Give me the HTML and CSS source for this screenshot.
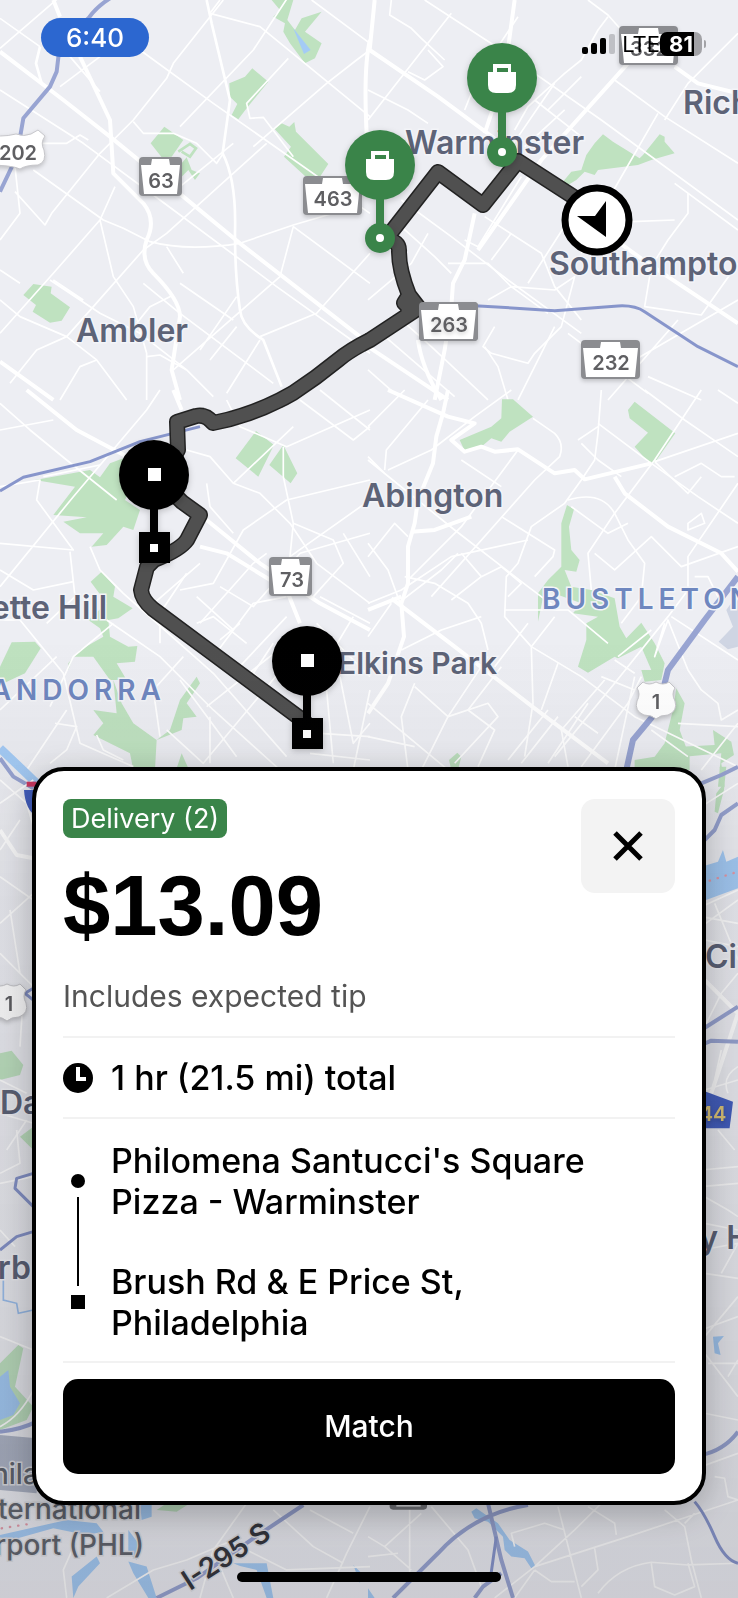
FILE: index.html
```html
<!DOCTYPE html>
<html lang="en">
<head>
  <meta charset="UTF-8">
  <meta name="viewport" content="width=device-width, initial-scale=1.0">
  <title>Delivery offer</title>
  <link rel="stylesheet" href="styles.css">
</head>
<body>
  <div class="screen">

    <svg class="map" viewBox="0 0 738 1598" preserveAspectRatio="xMidYMin slice" role="img" aria-label="Route map">
      <defs>
        <symbol id="bag" viewBox="0 0 30 30">
          <path d="M6 0h18v8h5v13q0 8-8 8H9q-8 0-8-8V8h5zM10 4v4h11V4z" fill-rule="evenodd"/>
        </symbol>
        <symbol id="us-shield" viewBox="0 0 42 40">
          <path d="M8 2q6 4 13 0q7 4 13 0l6 6q-4 6 0 13q3 10-7 14q-8 0-12 4q-4-4-12-4q-10-4-7-14q4-7 0-13z"/>
        </symbol>
        <symbol id="pa-wide" viewBox="0 0 59 39">
          <rect width="59" height="39" rx="4" fill="#8b8c90"/>
          <path d="M2 8h17l1-6h19l1 6h17l-3 29H5z" fill="#fff"/>
        </symbol>
        <symbol id="pa-small" viewBox="0 0 43 39">
          <rect width="43" height="39" rx="4" fill="#8b8c90"/>
          <path d="M2 8h10l1-6h17l1 6h10l-3 29H5z" fill="#fff"/>
        </symbol>
      </defs>

      <rect width="738" height="1598" fill="#edeef3"/>

      <!-- tiles -->
      <g transform="scale(.3333)">
        <g class="park">
          <path d="M815 0L880 0L862 60L885 90L905 55L965 35L915 95L965 130L945 175L915 190L870 130L850 95L855 70L820 50L840 30Z"/>
          <path d="M688 250L735 230L757 205L805 245L740 325L715 358L695 345L712 312L690 290Z"/>
          <path d="M822 385L845 370L868 380L883 366L888 395L985 492L960 530L915 528L852 470L873 440Z"/>
          <path d="M452 430L493 380L550 420L515 470L485 472Z"/>
          <path d="M545 490L560 472L575 510L600 520L585 540L565 510L545 530Z"/>
          <path d="M70 885L100 852L155 860L152 880L210 922L185 962L150 968L98 935L108 915Z"/>
        </g>
        <path d="M535 455L570 432L588 445L570 470L545 455" fill="none" stroke="#bfe2c0" stroke-width="8"/>
        <path class="water" d="M880 85L932 150L912 162Z"/>
        <g class="road">
          <path d="M0 55L120 140M0 145L180 -10M0 270L250 430L480 600L830 860L1110 1060"/>
          <path d="M0 720L60 640L45 500M45 575L135 675L155 640L300 460L400 360L500 235L520 190L670 0"/>
          <path d="M420 150L640 310L1110 640M300 275L210 170M540 380L760 150L865 -10"/>
          <path d="M760 440L980 250L1070 180L1110 150M865 175L740 310L750 355L790 352L880 470"/>
          <path d="M935 0L1110 130M660 0L630 40L780 80L1110 350"/>
          <path d="M120 430L200 430L240 405L265 420M100 510L310 660L370 685L450 725Q560 755 720 730L880 675L1000 640"/>
          <path d="M0 1000L160 820L300 660L345 560M300 660L340 830L400 920L440 1060L440 1200"/>
          <path d="M0 810L60 850M150 840L300 940L420 1000L560 1110L640 1190M160 840L250 900"/>
          <path d="M0 900L60 950L200 1010L290 1080L380 1200M30 1150L110 1050L200 1010L280 920L430 750L500 700L800 430"/>
          <path d="M410 970L450 920L520 885M430 850L540 940L820 1150M540 850L700 960M500 740L550 820"/>
          <path d="M520 1110L840 830L880 680L1110 850M600 1050L710 890M440 1070L480 1065L560 1110"/>
          <path d="M780 1010L950 940L1110 760M630 1080L710 980M680 1180L780 1020M180 1200L240 1100L290 1080"/>
          <path d="M400 365L430 400L520 400M520 400L590 430L650 490L670 460M540 560L700 430M180 260L300 170"/>
        </g>
        <g class="road mid">
          <path d="M620 0L635 70L690 300L668 460Q710 540 705 700Q705 830 720 930Q725 980 790 1020L845 1160"/>
          <path d="M120 140L108 190L125 250"/>
        </g>
        <g class="road wide">
          <path d="M0 155L190 300L330 410L550 590L720 730L1080 1010"/>
          <path d="M240 170L330 360L340 520L430 610Q470 660 440 720Q420 780 460 820Q540 900 540 950L515 1110L540 1200"/>
          <path d="M0 1085L160 1200M160 0L180 50M1110 120Q1090 200 1100 400"/>
        </g>
        <path class="highway" d="M330 -5Q290 20 265 55L180 130L170 215L150 260L70 355L50 470L0 575"/>
      </g>

      <g transform="translate(368) scale(.3333)">
        <g class="park">
          <path d="M585 545L610 515L640 510L655 465L680 430L705 403L735 425L815 475L825 465L875 403L890 410L890 425L920 460L850 480L810 495L690 510L680 525L650 515L625 540L600 555Z"/>
        </g>
        <g class="road">
          <path d="M170 0L400 150L700 360L1110 660M70 0L65 45L130 85L160 115L230 180M250 40L70 270L0 360"/>
          <path d="M450 50L330 230L290 330M0 270L120 330L180 370M180 150L225 200L170 240L120 215"/>
          <path d="M660 0L720 45L760 90M720 50L690 90L640 180L590 220L480 320L440 390"/>
          <path d="M740 240L890 350L1110 490M890 360L960 250L1110 100M640 230L540 330M590 330L470 440"/>
          <path d="M870 340L720 600L640 760M960 580L960 640L900 720L850 800L830 920L1000 945L1110 790"/>
          <path d="M920 550L1110 690M790 665L920 660M350 650L520 760L560 860L640 960M100 600L250 710L420 840L640 1000"/>
          <path d="M0 900L130 790L180 700M100 680L200 770L250 820M240 790L360 790L430 860L540 940M370 780L430 700"/>
          <path d="M360 900L430 860L560 870L620 830L580 980L500 1060L480 1090L370 1060L345 1040L380 980"/>
          <path d="M0 1110L80 1180M100 960L190 1040L360 1200M40 1000L260 1190M350 1040L390 1100L420 1200"/>
          <path d="M560 980L450 1200M600 1000L840 1180M930 960L720 1200M800 1080L1110 900M840 1130L1000 1200"/>
          <path d="M460 530L330 740L290 720M500 300L640 410M560 250L430 440M640 600L480 850"/>
        </g>
        <g class="road wide">
          <path d="M20 0L5 150L210 290L440 460M440 0L410 220L350 400M780 190L520 480L330 750"/>
          <path d="M700 690L840 790L1110 970M920 200L990 250L1110 280M320 640L290 780L255 850L250 920L230 1050L200 1200"/>
          <path d="M0 1040L240 1200M150 1020Q160 1100 220 1200"/>
        </g>
        <path class="highway thin" d="M320 917L560 932L750 918Q800 915 830 935L990 1040L1110 1100"/>
      </g>

      <g transform="translate(0 390) scale(.3333)">
        <g class="park">
          <path d="M105 270L270 240L300 262L330 220L370 205L420 240L375 330L420 360L400 420L370 410L320 465L275 470L310 430L240 430L190 395L260 382L160 375L225 290Z"/>
          <path d="M707 205L768 123L822 165L775 260ZM808 225L850 165L892 250L872 280Z"/>
          <path d="M272 575L305 545L345 590L340 620L398 655L355 685L325 690L330 740L385 770L412 768L405 815L350 820L380 870L330 870L280 800L220 800L205 840L205 820L240 780L310 740L300 715L265 690L320 640Z"/>
          <path d="M35 757L105 755L122 775L75 850L0 885L0 830Z"/>
          <path d="M340 870L365 940L400 1000L470 1050L510 1020L540 930L590 860L600 880L560 940L590 980L550 985L545 1020L470 1050L465 1140L400 1140L390 1090L280 1035L310 1000L280 960L350 970Z"/>
          <path d="M530 1135L545 1090L565 1135Z"/>
        </g>
        <g class="road">
          <path d="M0 40L90 120L200 210L350 330M0 290L120 270L110 330L220 480L0 460M0 590L220 320L440 60L480 0"/>
          <path d="M0 120L160 90M210 485L225 620L140 700M130 260L300 225M270 470L300 540L370 610L640 850L860 1100"/>
          <path d="M220 575L100 600L0 540M0 690L60 690L190 850L240 1060L400 1130M320 690L480 800L640 960L840 1140"/>
          <path d="M560 180L630 200L700 280L780 310L870 400L950 520L1110 640M620 280L630 350L700 430"/>
          <path d="M680 30L720 110L860 170L1110 60M700 280L880 110M850 170L850 260L880 400L870 500L1110 330"/>
          <path d="M540 600L640 580L730 420L860 330L1110 270M660 590L760 650L900 490L1110 430M480 760L480 670L560 550"/>
          <path d="M450 650L600 520M590 620L700 720M600 700L760 520L800 490M640 800L760 640L860 620M700 850L860 680"/>
          <path d="M620 950L860 760M540 870L710 1100M500 1020L610 1120L860 820M630 980L630 1120M150 1120L200 1080L230 1010L165 1000"/>
          <path d="M900 30L1060 150L1110 110M960 0L1110 120M880 400L1000 450L1030 520L940 620M1030 430L1110 560"/>
          <path d="M960 620L1110 700M950 700L1110 860M1060 680L1000 780M820 760L760 850L940 1010M980 900L1000 1120M1020 860L1060 1060L1110 1000"/>
          <path d="M960 1030L1110 1040M930 1090L1110 1110M1110 900L1060 1140M550 800L460 900L480 1040M340 700L220 800L150 950"/>
          <path d="M0 960L170 800M80 1140L200 960M290 1035L310 1080L370 1110M590 700L640 680L740 760M660 750L720 700"/>
        </g>
        <g class="road wide">
          <path d="M80 0L230 120L400 210L470 260L620 390L780 520L960 640L1110 720"/>
          <path d="M600 470L680 490L860 600L900 700M520 0L545 60"/>
        </g>
        <path class="highway thin" d="M0 303L70 262L270 215L420 155L600 110"/>
        <path class="river" d="M0 1075L110 1180"/>
        <path class="highway" d="M0 1105L40 1160L100 1195"/>
      </g>

      <g transform="translate(368 390) scale(.3333)">
        <g class="park">
          <path d="M402 28L435 28L495 80L425 125L400 155L370 145L340 170L290 182L275 150L370 110L400 85Z"/>
          <path d="M780 60L800 35L922 130L860 218L840 215L800 170L840 128L785 85Z"/>
          <path d="M597 345L618 358L603 410L610 480L635 510L625 545L590 540L610 590L670 600L740 625L755 710L775 745L820 698L860 760L890 820L880 870L830 875L820 840L850 840L820 770L750 805L740 800L660 848L630 830L655 750L655 700L690 680L615 670L640 640L530 600L510 695L510 610L540 570L580 530L580 400Z"/>
          <path d="M925 895L950 940L935 1020L965 1100L965 1140L800 1140L800 1110L860 1100L890 1060L915 960Z"/>
          <path d="M940 1070L1040 1065L1035 1020L1090 1055L1098 1095L1060 1120L1070 1190L1050 1190L1060 1090L950 1100Z"/>
          <path d="M243 1110L268 1088L280 1100L270 1140L250 1140Z"/>
        </g>
        <path fill="#cfd5e3" d="M1110 610L1075 660L1095 710L1052 755L1080 778L1110 770Z"/>
        <g class="road">
          <path d="M0 110L110 0M0 210L260 420L480 590L560 650M50 240L55 180L180 30M50 250L0 200M60 240L190 180L320 80L430 0"/>
          <path d="M700 0L690 130L680 210L640 270L590 340L490 410L450 520L415 560L410 680L490 770L495 940L470 1100"/>
          <path d="M495 85L560 130Q590 160 575 200L500 270L190 620M630 150L690 110M640 160L690 210L760 260M690 100L850 220L990 320L1110 400"/>
          <path d="M830 0L950 90L1110 200M1000 0L860 210L740 370L660 490L670 600M860 215L1110 130M1050 0L1110 40M1110 280L960 500L960 600L900 680L740 880L560 1100"/>
          <path d="M920 260L1000 220L1060 260L1100 260M860 215L960 310L1000 260M600 330Q700 300 740 370L780 450L830 520L820 620L760 700"/>
          <path d="M610 350L720 430L780 400M680 490L740 540L850 440L940 530L1110 470M960 400L1000 370L1010 400L960 420Z"/>
          <path d="M0 640L100 600L250 500L480 450M120 570L280 410L450 180M0 500L80 400L120 440M280 210L400 290M0 460L60 540L100 650"/>
          <path d="M110 560L200 580L300 640L340 700L360 780M280 490L340 560L250 630M340 560L400 530L460 580L420 620M410 660L600 660L720 760"/>
          <path d="M400 380L560 480L555 500L500 560M70 640L0 740M90 640L220 540L270 490M100 780L220 720L340 680"/>
          <path d="M360 800L240 980L160 1140M400 830L300 960L380 1020L330 1130M0 940L240 1140M490 770L640 860L800 980L1110 1130"/>
          <path d="M140 880L100 980L120 1140M140 890L240 980L360 940L390 980L260 1120M0 1040L140 1070M570 820L520 960M710 870L580 1020L600 1130"/>
          <path d="M800 860L740 1140M640 1130L780 940L820 860M890 700L860 800L900 690L960 840L1000 900L1050 940L1060 990L1110 960M930 1000L1110 1010"/>
          <path d="M910 680L1110 810M540 960L420 1110M570 980L460 1120M620 980L690 1030M660 940L540 1120M480 700L380 830M560 680L490 770"/>
          <path d="M740 810L800 850M750 800L850 720M850 1020L960 1100M1110 1000L1000 1140M700 860L800 900M980 560L1020 560L1050 620"/>
        </g>
        <g class="road wide">
          <path d="M240 0L225 70L205 140L195 220L150 330L140 400L120 470L120 580L100 640L108 740L60 880L0 970"/>
          <path d="M60 0L240 80L320 100L250 150L290 185L340 170L380 185L450 178L560 250L620 240L650 268L850 220"/>
          <path d="M740 260L770 310L900 410L1060 490L1110 545M130 425L200 420L310 380"/>
          <path d="M70 625L260 770L500 955L720 1120M0 660L100 620"/>
        </g>
        <path class="highway broad" d="M1110 560L1010 690L900 840L870 960L795 1050L775 1140"/>
      </g>

      <!-- side strips and bottom -->
      <g transform="translate(0 760) scale(.3333)">
        <path class="park" d="M0 880L35 872L70 915L60 945L0 960ZM60 1130L100 1100L100 1170Z"/>
        <g class="road">
          <path d="M0 130L100 60M0 60L80 130L100 200M0 350L100 420M0 490L100 400M0 580L100 680M30 450L60 640M0 270L60 180M70 700L60 860M0 960L80 1000M20 1170L80 1080M0 1060L100 1090"/>
        </g>
        <path class="road wide" d="M0 210L50 285L100 295"/>
        <path class="highway thin" d="M100 685L75 700L100 720"/>
        <path fill="#cf3a62" d="M80 65H110V80H80Z"/>
        <path fill="#435fc0" d="M72 90H110V170Q76 150 72 90Z"/>
      </g>
      <g transform="translate(368 760) scale(.3333)">
        <path class="park" d="M1055 20L1075 20L1068 90L1050 160L1040 155L1045 100L1060 80Z"/>
        <path class="water" d="M1000 320L1050 305L1065 270L1075 305L1110 290L1110 385L1000 425Z"/>
        <path d="M1025 362L1110 335" stroke="#e39aa8" stroke-width="7" stroke-dasharray="1 24" stroke-linecap="round"/>
        <g class="road">
          <path d="M1000 140L1110 70M1000 440L1110 390M1000 500L1110 420M1010 540L1110 560M1040 430L1110 600M1000 470L1110 490M1010 800L1060 700L1110 640M1060 870L1040 960M1110 920Q1060 950 1080 1000M1010 990L1110 960"/>
        </g>
        <path class="road wide" d="M1000 650L1110 760L1030 1000"/>
        <path class="highway" d="M1000 70L1060 45L1110 20M1000 250L1040 210L1060 165L1110 130M1000 810L1110 740M1000 855L1030 842L1110 845"/>
        <path fill="#435fc0" d="M1000 990L1095 1025L1085 1105H1000Z"/>
      </g>
      <g transform="translate(0 1130) scale(.3333)">
        <path class="park" d="M55 645L70 655L45 770L100 830L80 870L0 900L0 700ZM470 1140L500 1120L570 1120L530 1145Z"/>
        <path fill="#aeb5c6" d="M0 915L110 925L110 1090L0 1080Z"/>
        <path class="water" d="M0 740L25 720L30 770L60 820L40 855L0 870ZM0 1215L200 1170L290 1180L310 1205L260 1215L160 1195L0 1240ZM420 1120H455V1160L425 1170ZM215 1340L290 1280L300 1300L235 1370L220 1404ZM385 1200L415 1240L410 1290L385 1270ZM385 1295L440 1310L470 1404L445 1404L400 1330ZM700 1300L800 1300L820 1404L800 1404L770 1320L720 1308ZM1060 1305L1085 1330L1080 1360Z"/>
        <path d="M5 1195L100 1180" stroke="#e39aa8" stroke-width="7" stroke-dasharray="1 24" stroke-linecap="round"/>
        <g class="road">
          <path d="M50 0L60 100L0 130M0 300L45 350M0 620L100 660M0 160L100 140M0 890Q60 860 100 780M320 1404L460 1320L560 1290L700 1230M740 1120L640 1260L600 1404M820 1140L940 1250L1030 1300M700 1240L860 1320L1110 1310M980 1404L1040 1270L1110 1130M200 1404L190 1320L230 1230M660 1310L700 1404M930 1140L1060 1210"/>
        </g>
        <path class="highway thin" d="M100 130L50 145L45 175L100 230M0 360L50 320L100 305"/>
        <path d="M10 440V510L50 520L55 550L100 540" fill="none" stroke="#9cc0ee" stroke-width="5"/>
        <path class="highway" d="M0 905Q60 900 110 875M910 1125L760 1225L590 1345L470 1404"/>
      </g>
      <g transform="translate(368 1130) scale(.3333)">
        <path class="water" d="M1035 620L1068 618L1050 640L1058 675L1040 670ZM310 1145L325 1135L390 1180L425 1230L480 1265L503 1310L490 1315L470 1285L430 1280L410 1260L405 1220L360 1175L320 1165ZM0 1375L20 1404H0Z"/>
        <g class="road">
          <path d="M1000 120L1110 110M1000 170L1110 160M1010 200L1080 240L1110 260M1050 0L1100 60M1010 280L1110 300M1000 360L1110 340M1010 430L1110 445M1060 430L1110 340M1010 620L1110 500M1010 670L1110 800M1080 740L1110 690M1020 700H1110M1000 600L1110 560M1010 850L1110 870M1000 1010L1110 970M1040 1040L1070 1045L1080 1100L1110 1110"/>
          <path d="M125 1130V1330M0 1220L50 1250L130 1320M50 1250L160 1150M190 1130L300 1260L340 1370M0 1280L90 1270M380 1404L500 1310L620 1200L700 1120M500 1310L780 1220L1110 1110M570 1130L640 1404M440 1250L430 1210L530 1180L590 1200M660 1130L740 1180L745 1215M680 1255L690 1320L640 1370M690 1390Q750 1310 850 1297L960 1305L1110 1300M850 1300L860 1370L920 1395L980 1370L960 1300M890 1140L950 1190L970 1290L1000 1404M980 1150L950 1180M500 1320L550 1355H620M440 1404L500 1320"/>
        </g>
        <path class="highway" d="M1000 975Q1070 960 1110 905M480 1125Q320 1150 210 1270L75 1404M360 1120L400 1290L435 1404M320 1404L345 1370L400 1330"/>
        <path class="highway thin" d="M385 1220L368 1340M980 1115Q1010 1150 1040 1220T1110 1300"/>
        <rect x="65" y="1095" width="112" height="44" rx="10" fill="#77787c"/>
        <path d="M85 1120H158V1130H85Z" fill="#e4e4e6"/>
      </g>

      <!-- place names -->
      <g class="place">
        <text x="76" y="342">Ambler</text>
        <text x="405" y="154">Warminster</text>
        <text x="683" y="114">Richboro</text>
        <text x="549" y="275">Southampton</text>
        <text x="362" y="507">Abington</text>
        <text x="107" y="619" text-anchor="end">Lafayette Hill</text>
        <text x="705" y="968">Cinnaminson</text>
        <text x="0" y="1114">Darby</text>
        <text x="31" y="1279" text-anchor="end">Darb</text>
        <text x="750" y="1249" text-anchor="end">Cherry H</text>
      </g>
      <text class="place minor" x="338" y="674">Elkins Park</text>
      <g class="place district">
        <text x="542" y="609">BUSTLETON</text>
        <text x="166" y="700" text-anchor="end">ANDORRA</text>
      </g>
      <g class="place airport">
        <text x="-26" y="1484">Philadelphia</text>
        <text x="141" y="1519" text-anchor="end">International</text>
        <text x="144" y="1555" text-anchor="end">Airport (PHL)</text>
      </g>
      <text class="place interstate" transform="translate(190 1591) rotate(-33)">I-295 S</text>

      <!-- road shields -->
      <g class="shields">
        <use href="#pa-small" x="139" y="157" width="43" height="39"/>
        <text x="161" y="188">63</text>
        <use href="#pa-wide" x="303" y="176" width="59" height="39"/>
        <text x="333" y="206">463</text>
        <use href="#pa-wide" x="419" y="302" width="59" height="39"/>
        <text x="449" y="332">263</text>
        <use href="#pa-wide" x="581" y="340" width="59" height="39"/>
        <text x="611" y="370">232</text>
        <use href="#pa-wide" x="619" y="26" width="59" height="39"/>
        <text x="649" y="56">332</text>
        <use href="#pa-small" x="269" y="557" width="43" height="39"/>
        <text x="292" y="587">73</text>
        <use class="us" href="#us-shield" x="635" y="680" width="42" height="40"/>
        <text x="656" y="709">1</text>
        <use class="us" href="#us-shield" x="-14" y="982" width="42" height="40"/>
        <text x="9" y="1011">1</text>
        <path class="us" d="M-14 134q14 4 30 0q8 3 15 0l7-4l7 6q-5 7-1 14q3 12-6 15q-12 0-18 4q-8-4-34-4z"/>
        <text x="18" y="160">202</text>
        <text x="713" y="1121" class="gold">44</text>
      </g>

      <!-- route -->
      <g class="route">
        <path id="route" d="M597 212L518 161L483 205L438 172L385 240Q400 240 399 252Q399 270 409 295L404 303L414 311L370 340Q350 350 338 360Q316 378 293 393Q255 415 213 423Q206 414 196 416L177 422L178 450L160 480L182 502L200 515L187 540Q180 550 154 560L147 567L141 590Q142 600 153 609L305 722M409 295L419 308L414 311M408 298V310"/>
        <use href="#route" class="route-fill"/>
      </g>
      <use href="#pa-wide" x="419" y="302" width="59" height="39"/>
      <g class="shields"><text x="449" y="332">263</text></g>

      <!-- stops -->
      <g class="pin pickup">
        <path d="M380 165V238" stroke-width="8"/>
        <circle cx="380" cy="165" r="35"/><circle cx="380" cy="238" r="15"/>
        <circle class="hole" cx="380" cy="238" r="4"/>
        <use class="hole bag" href="#bag" x="365" y="151" width="30" height="30"/>
        <path d="M502 78V152" stroke-width="8"/>
        <circle cx="502" cy="78" r="35"/><circle cx="502" cy="152" r="15"/>
        <circle class="hole" cx="502" cy="152" r="4"/>
        <use class="hole bag" href="#bag" x="487" y="64" width="30" height="30"/>
      </g>
      <g class="pin dropoff">
        <path d="M154 475V548M307 661V734" stroke-width="8"/>
        <circle cx="154" cy="475" r="35"/><rect x="139" y="532" width="31" height="31"/>
        <rect class="hole" x="148" y="468" width="13" height="13"/><rect class="hole" x="150" y="544" width="8" height="8"/>
        <circle cx="307" cy="661" r="35"/><rect x="292" y="718" width="31" height="31"/>
        <rect class="hole" x="301" y="654" width="13" height="13"/><rect class="hole" x="303" y="730" width="8" height="8"/>
      </g>
      <circle cx="597" cy="220" r="32" fill="#fff" stroke="#000" stroke-width="7"/>
      <path d="M577 216L595 216L606 201L606 237Z"/>
    </svg>

    <div class="shade"></div>

    <header class="status-bar">
      <time class="clock">6:40</time>
      <div class="signals">
        <svg class="bars" viewBox="0 0 34 22" aria-hidden="true">
          <rect x="0" y="14" width="6" height="7" rx="2"/>
          <rect x="9" y="10" width="6" height="11" rx="2"/>
          <rect x="18" y="5" width="6" height="16" rx="2"/>
          <rect x="27" y="1" width="6" height="20" rx="2" fill="#bfc0c5"/>
        </svg>
        <span class="network">LTE</span>
        <span class="battery">81</span>
      </div>
    </header>

    <main class="offer">
      <div class="offer-top">
        <div>
          <span class="badge">Delivery (2)</span>
          <h1 class="price">$13.09</h1>
        </div>
        <button type="button" class="close" aria-label="Close">
          <svg viewBox="0 0 30 30" aria-hidden="true"><path d="M2 2L28 28M28 2L2 28"/></svg>
        </button>
      </div>
      <p class="tip">Includes expected tip</p>

      <div class="row">
        <svg class="clock-icon" viewBox="0 0 30 30" aria-hidden="true">
          <circle cx="15" cy="15" r="15"/>
          <path d="M15 4V16H23" fill="none" stroke="#fff" stroke-width="4"/>
        </svg>
        <span>1 hr (21.5 mi) total</span>
      </div>

      <div class="stops">
        <div class="rail">
          <i class="dot"></i>
          <i class="line"></i>
          <i class="square"></i>
        </div>
        <div class="addresses">
          <p>Philomena Santucci's Square Pizza - Warminster</p>
          <p>Brush Rd &amp; E Price St, Philadelphia</p>
        </div>
      </div>

      <button type="button" class="match">Match</button>
    </main>

    <div class="home-indicator"></div>
  </div>
</body>
</html>
```
FILE: styles.css
```css
* {
  box-sizing: border-box;
}
body {
  margin: 0;
  font-family: Inter, "Liberation Sans", sans-serif;
  color: #000;
}
h1, p {
  margin: 0;
}
.screen {
  position: relative;
  min-height: 100vh;
  display: flex;
  flex-direction: column;
  overflow: hidden;
}

/* map */
.map, .shade {
  position: absolute;
  inset: 0;
  width: 100%;
  height: 100%;
}
.shade {
  background: linear-gradient(transparent 40%, rgba(30, 30, 40, 0.08) 55%, rgba(30, 30, 40, 0.16) 100%);
}
.park {
  fill: #bfe2c0;
}
.water {
  fill: #a4cbf5;
}
.road {
  fill: none;
  stroke: #fff;
  stroke-width: 5;
  stroke-linejoin: round;
}
.road.mid {
  stroke-width: 8;
}
.road.wide {
  stroke-width: 12;
}
.highway {
  fill: none;
  stroke: #98a4d2;
  stroke-width: 12;
  stroke-linejoin: round;
}
.highway.thin {
  stroke: #8795cb;
  stroke-width: 9;
}
.highway.broad {
  stroke-width: 18;
}
.river {
  stroke: #a4cbf5;
  stroke-width: 26;
}
.place {
  font-size: 32px;
  font-weight: 600;
  fill: #5d6377;
  stroke: #f3f4f8;
  stroke-width: 3;
  paint-order: stroke;
}
.minor {
  font-size: 30px;
}
.district {
  font-size: 28px;
  letter-spacing: 5px;
  fill: #6f87bf;
}
.airport {
  font-size: 28px;
  font-weight: 500;
  fill: #60646c;
  stroke: #dddee2;
}
.interstate {
  font-size: 28px;
  fill: #33353b;
  stroke: #dddee2;
}
.shields {
  font-size: 20px;
  font-weight: 600;
  text-anchor: middle;
  fill: #5f5f62;
  filter: drop-shadow(0 2px 2px rgba(0, 0, 0, 0.2));
}
.us {
  fill: #fff;
  stroke: #c6c6ca;
}
.gold {
  fill: #e0c878;
}
.route {
  fill: none;
  stroke: #222;
  stroke-width: 16;
  stroke-linejoin: round;
  stroke-linecap: round;
}
.route-fill {
  stroke: #505050;
  stroke-width: 13;
}
.pickup {
  fill: #3a8449;
}
.pickup > path {
  stroke: #3a8449;
}
.dropoff > path {
  stroke: #000;
}
.pin {
  filter: drop-shadow(0 2px 3px rgba(0, 0, 0, 0.2));
}
.pin .hole {
  fill: #fff;
}

/* status bar */
.status-bar {
  position: relative;
  display: flex;
  justify-content: space-between;
  align-items: flex-start;
  padding: 18px 36px 0 41px;
}
.clock {
  width: 108px;
  border-radius: 20px;
  background: #2c67d0;
  color: #fff;
  font-size: 26px;
  font-weight: 500;
  line-height: 39px;
  text-align: center;
}
.signals {
  display: flex;
  align-items: center;
  padding-top: 14px;
}
.bars {
  width: 34px;
  height: 22px;
  margin-right: 6px;
}
.network {
  font-size: 22px;
  line-height: 24px;
}
.battery {
  position: relative;
  width: 42px;
  border-radius: 7px;
  background: linear-gradient(90deg, #000 82%, #a2a2a6 82%);
  color: #fff;
  font-size: 22px;
  font-weight: 700;
  line-height: 24px;
  text-align: center;
}
.battery::after {
  content: "";
  position: absolute;
  top: 8px;
  right: -4px;
  width: 2px;
  height: 8px;
  border-radius: 0 2px 2px 0;
  background: #a2a2a6;
}

/* offer card */
.offer {
  position: relative;
  margin: auto 32px 67px;
  padding: 28px 27px 27px;
  border: 4px solid #000;
  border-radius: 32px;
  background: #fff;
  box-shadow: 0 8px 32px rgba(0, 0, 0, 0.24);
  font-size: 34px;
  font-weight: 500;
}
.offer-top {
  display: flex;
  justify-content: space-between;
  align-items: flex-start;
}
.badge {
  display: block;
  width: max-content;
  padding: 0 8px;
  border-radius: 8px;
  background: #3a8449;
  color: #fff;
  font-size: 27px;
  font-weight: 400;
  line-height: 39px;
}
.price {
  margin-top: 20px;
  font-family: "Liberation Sans", Arial, sans-serif;
  font-size: 85px;
  font-weight: 700;
  line-height: 96px;
}
.close {
  width: 94px;
  height: 94px;
  padding: 0;
  border: none;
  border-radius: 14px;
  background: #f3f3f3;
  cursor: pointer;
}
.close svg {
  display: block;
  width: 30px;
  height: 30px;
  margin: 0 auto;
  stroke: #000;
  stroke-width: 5;
}
.tip {
  padding: 22px 0 20px;
  color: #545454;
  font-size: 30px;
  font-weight: 400;
  line-height: 40px;
}
.row {
  display: flex;
  align-items: center;
  gap: 18px;
  border-top: 2px solid #f2f2f2;
  line-height: 79px;
}
.clock-icon {
  width: 30px;
  height: 30px;
}
.stops {
  display: flex;
  gap: 18px;
  padding: 21px 0 18px;
  border-top: 2px solid #f2f2f2;
  border-bottom: 2px solid #f2f2f2;
  line-height: 41px;
}
.rail {
  display: flex;
  flex-direction: column;
  align-items: center;
  gap: 9px;
  width: 30px;
  padding: 34px 0;
}
.dot, .square {
  width: 14px;
  height: 14px;
  background: #000;
}
.dot {
  border-radius: 50%;
}
.line {
  flex: 1;
  width: 2px;
  background: #000;
}
.addresses {
  flex: 1;
  display: flex;
  flex-direction: column;
  gap: 39px;
}
.addresses p {
  max-width: 500px;
}
.addresses p + p {
  max-width: 400px;
}
.match {
  width: 100%;
  margin-top: 16px;
  padding: 0;
  border: none;
  border-radius: 15px;
  background: #000;
  color: #fff;
  font-family: inherit;
  font-size: 30px;
  font-weight: 500;
  line-height: 95px;
  cursor: pointer;
}
.home-indicator {
  position: relative;
  width: 264px;
  height: 10px;
  margin: 0 auto 16px;
  border-radius: 5px;
  background: #000;
}
```
